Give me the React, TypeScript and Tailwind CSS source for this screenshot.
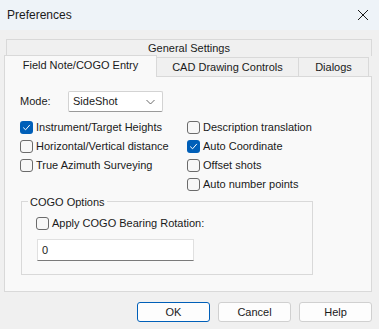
import React from 'react';

const Box: React.FC<{ checked?: boolean }> = ({ checked }) =>
  checked ? (
    <span className="w-[13px] h-[13px] rounded-[3px] bg-[#005fb8] flex items-center justify-center shrink-0">
      <svg width="9" height="9" viewBox="0 0 9 9" fill="none">
        <path d="M1.5 4.8 L3.6 6.8 L7.6 2.2" stroke="#ffffff" strokeWidth="1" strokeLinecap="round" strokeLinejoin="round" />
      </svg>
    </span>
  ) : (
    <span className="w-[13px] h-[13px] rounded-[3px] border border-[#6b6b6b] bg-[#f7f7f7] shrink-0" />
  );

const Check: React.FC<{ label: string; checked?: boolean }> = ({ label, checked }) => (
  <div className="h-[19px] flex items-center gap-[3px] text-[#1a1a1a]">
    <Box checked={checked} />
    <span>{label}</span>
  </div>
);

const Btn: React.FC<{ label: string; primary?: boolean }> = ({ label, primary }) => (
  <button
    className={
      primary
        ? 'w-[73px] h-[20px] rounded-[3px] border border-[#005fb8] bg-[#fdfdfd] text-[#1a1a1a] flex items-center justify-center'
        : 'w-[73px] h-[20px] rounded-[3px] border border-[#d0d0d0] bg-[#fdfdfd] text-[#1a1a1a] flex items-center justify-center'
    }
  >
    {label}
  </button>
);

export default function App() {
  return (
    <div
      className="w-[379px] h-[329px] bg-[#f0f0f0] flex flex-col overflow-hidden text-[11px] text-[#1a1a1a]"
      style={{ fontFamily: '"Liberation Sans", Arial, sans-serif' }}
    >
      {/* ── Title bar ───────────────────────────── */}
      <div className="h-[30px] bg-[#eef3f8] flex items-center justify-between pl-[7px] pr-[10px] shrink-0">
        <span className="text-[12px] text-[#1a1a1a]">Preferences</span>
        <svg width="12" height="12" viewBox="0 0 12 12">
          <path d="M1 1 L11 11 M11 1 L1 11" stroke="#1a1a1a" strokeWidth="1" />
        </svg>
      </div>

      {/* ── Tabs ───────────────────────────────── */}
      <div className="pt-[9px]">
        <div className="ml-[6px] w-[366px] h-[17px] border border-b-0 border-[#d9d9d9] bg-[#f0f0f0] flex items-center justify-center">
          General Settings
        </div>
        <div className="ml-[4px] h-[20px] flex items-end relative z-10">
          <div className="w-[153px] h-[22px] -mb-[1px] border border-b-0 border-[#d9d9d9] bg-[#f9f9f9] flex items-center justify-center pb-[2px]">
            Field Note/COGO Entry
          </div>
          <div className="w-[142px] h-[19px] border border-l-0 border-b-0 border-[#d9d9d9] bg-[#f0f0f0] flex items-center justify-center">
            CAD Drawing Controls
          </div>
          <div className="w-[70px] h-[19px] border border-l-0 border-b-0 border-[#d9d9d9] bg-[#f0f0f0] flex items-center justify-center">
            Dialogs
          </div>
        </div>
      </div>

      {/* ── Panel ──────────────────────────────── */}
      <div className="ml-[4px] w-[368px] h-[216px] border border-[#d9d9d9] bg-[#f9f9f9] pl-[15px] pt-[14px]">
        <div className="flex items-center h-[21px]">
          <span className="w-[48px]">Mode:</span>
          <div className="w-[95px] h-[21px] border border-[#d3d3d3] border-b-[#9a9a9a] rounded-[2px] bg-[#ffffff] flex items-center justify-between pl-[4px] pr-[7px]">
            <span>SideShot</span>
            <svg width="9" height="6" viewBox="0 0 9 6" fill="none">
              <path d="M0.5 1 L4.5 5 L8.5 1" stroke="#5a5a5a" strokeWidth="0.9" />
            </svg>
          </div>
        </div>

        <div className="mt-[6px] grid grid-cols-[167px_1fr]">
          <div className="flex flex-col">
            <Check label="Instrument/Target Heights" checked />
            <Check label="Horizontal/Vertical distance" />
            <Check label="True Azimuth Surveying" />
          </div>
          <div className="flex flex-col">
            <Check label="Description translation" />
            <Check label="Auto Coordinate" checked />
            <Check label="Offset shots" />
            <Check label="Auto number points" />
          </div>
        </div>

        {/* COGO Options group */}
        <div className="relative mt-[7px] ml-[1px] w-[292px] h-[74px] border border-[#d9d9d9] pl-[14px] pt-[12px]">
          <span className="absolute -top-[8px] left-[6px] px-[2px] bg-[#f9f9f9]">COGO Options</span>
          <Check label="Apply COGO Bearing Rotation:" />
          <div className="mt-[6px] ml-[1px] w-[157px] h-[22px] border border-[#e0e0e0] border-b-[#7a7a7a] bg-[#ffffff] flex items-center pl-[4px]">
            0
          </div>
        </div>
      </div>

      {/* ── Buttons ────────────────────────────── */}
      <div className="mt-[10px] flex justify-end gap-[8px] pr-[7px]">
        <Btn label="OK" primary />
        <Btn label="Cancel" />
        <Btn label="Help" />
      </div>
    </div>
  );
}
